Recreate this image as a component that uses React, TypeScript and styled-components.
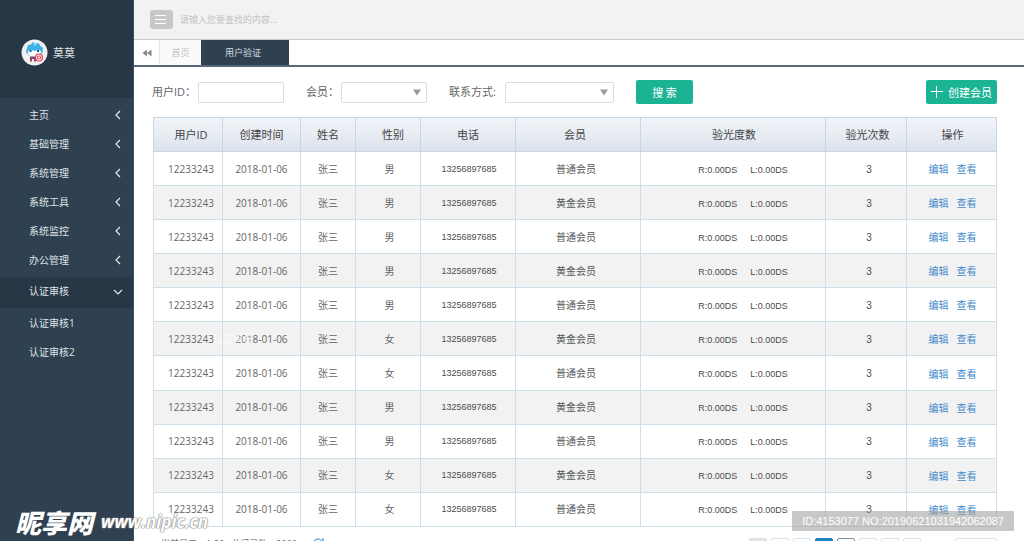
import React from "react";
import styled, { createGlobalStyle } from "styled-components";

const sans = `"Open Sans", "Noto Sans CJK SC", sans-serif`;
const cjk = `"Noto Sans CJK SC", sans-serif`;
const arial = `"Liberation Sans", "Noto Sans CJK SC", sans-serif`;

const GlobalStyle = createGlobalStyle`
  * { box-sizing: border-box; }
  body { margin: 0; font-family: ${cjk}; font-size: 11px; color: #666; background: #fff; overflow: hidden; }
  button, input, select { font: inherit; }
  button { border: 0; padding: 0; background: none; color: inherit; cursor: pointer; }
  a { color: inherit; text-decoration: none; }
`;

const Shell = styled.div`
  display: flex;
  height: 100vh;
  overflow: hidden;
`;

const Sidebar = styled.aside`
  flex: 0 0 134px;
  background: #2f4050;
  border-right: 1px solid #3d5064;
  color: #dfe3e7;
`;

const Profile = styled.div`
  display: flex;
  align-items: center;
  gap: 5px;
  height: 98px;
  padding: 6px 0 0 21px;
  background: #283745;
  font-size: 11px;
`;

const Avatar = styled.svg`
  width: 27px;
  height: 27px;
`;

const NavList = styled.nav`
  display: flex;
  flex-direction: column;
  padding-top: 3px;
`;

const NavItem = styled.button<{ $open?: boolean }>`
  display: flex;
  align-items: center;
  justify-content: space-between;
  height: ${(p) => (p.$open ? 31 : 29)}px;
  padding: 0 10px ${(p) => (p.$open ? 4 : 2)}px 29px;
  margin: ${(p) => (p.$open ? "2px 0 1px" : 0)};
  background: ${(p) => (p.$open ? "#283745" : "transparent")};
  font-size: 10px;
  line-height: 14px;
`;

const SubItem = styled.a`
  height: 29px;
  padding-left: 29px;
  font-family: ${sans};
  font-size: 10px;
  line-height: 29px;
`;

const Chevron = styled.svg`
  width: 10px;
  height: 10px;
  fill: none;
  stroke: #e4e8eb;
  stroke-width: 1.2;
`;

const Main = styled.main`
  flex: 1;
  min-width: 0;
  display: flex;
  flex-direction: column;
`;

const TopBar = styled.header`
  display: flex;
  align-items: center;
  gap: 7px;
  flex: 0 0 40px;
  padding: 0 16px 1px;
  background: #f2f2f2;
  border-bottom: 1px solid #c8c8c8;
`;

const MenuButton = styled.button`
  width: 23px;
  height: 19px;
  border-radius: 3px;
  background: #c8c8c8;
  svg { display: block; }
`;

const SearchInput = styled.input`
  width: 200px;
  height: 20px;
  padding: 0;
  border: 0;
  background: transparent;
  font-size: 9px;
  &::placeholder { color: #c2c2c2; }
`;

const TabBar = styled.div`
  display: flex;
  flex: 0 0 27px;
  border-bottom: 2px solid #5a687b;
`;

const TabBack = styled.button`
  width: 25px;
  svg { display: block; margin: 0 auto; }
`;

const Tab = styled.button<{ $active?: boolean }>`
  width: ${(p) => (p.$active ? 88 : 42)}px;
  background: ${(p) => (p.$active ? "#2f4050" : "#fafafa")};
  color: ${(p) => (p.$active ? "#d9dde1" : "#bdbdbd")};
  border-left: ${(p) => (p.$active ? 0 : "1px solid #e6e6e6")};
  font-size: 9px;
  padding-right: ${(p) => (p.$active ? 4 : 0)}px;
`;

const Filters = styled.form`
  display: flex;
  align-items: center;
  padding: 13px 27px 13px 18px;
  height: 50px;
`;

const Field = styled.label<{ $gap?: number }>`
  display: flex;
  align-items: center;
  gap: ${(p) => p.$gap ?? 2}px;
  margin-right: 22px;
  font-family: ${sans};
  font-size: 11px;
  line-height: 16px;
  white-space: nowrap;
`;

const TextInput = styled.input`
  width: 86px;
  height: 21px;
  border: 1px solid #dcdcdc;
  border-radius: 2px;
  background: #fff;
`;

const SelectWrap = styled.span<{ $width: number }>`
  display: grid;
  align-items: center;
  width: ${(p) => p.$width}px;
  > * { grid-area: 1 / 1; }
  svg { justify-self: end; margin-right: 5px; pointer-events: none; }
`;

const Select = styled.select`
  appearance: none;
  width: 100%;
  height: 21px;
  border: 1px solid #dcdcdc;
  border-radius: 2px;
  background: #fff;
`;

const GreenButton = styled.button<{ $width: number }>`
  display: flex;
  align-items: center;
  justify-content: center;
  gap: 5px;
  width: ${(p) => p.$width}px;
  height: 24px;
  border-radius: 2px;
  background: #1ab394;
  color: #fff;
  font-size: 11px;
  line-height: 16px;
  white-space: pre;
`;

const Spacer = styled.span`
  flex: 1;
`;

const TableArea = styled.section`
  padding: 0 27px 0 19px;
`;

const Table = styled.table`
  width: 100%;
  height: 410px;
  table-layout: fixed;
  border-collapse: collapse;
  border: 1px solid #cfdfe9;
`;

const Th = styled.th<{ $left?: number; $right?: number }>`
  height: 34px;
  padding: 0 ${(p) => p.$right ?? 0}px 0 ${(p) => p.$left ?? 0}px;
  border: 1px solid #c5d7e4;
  font-family: ${sans};
  font-size: 11px;
  line-height: 16px;
  font-weight: 400;
  color: #444;
`;

const HeadRow = styled.tr`
  background: linear-gradient(#f2f3f8, #dce3ed);
`;

const BodyRow = styled.tr`
  &:nth-child(even) { background: #f2f2f2; }
`;

const Td = styled.td<{ $left?: number; $right?: number }>`
  padding: 0 ${(p) => p.$right ?? 0}px 0 ${(p) => p.$left ?? 0}px;
  border: 1px solid #cfdfe9;
  text-align: center;
  white-space: nowrap;
  font-family: ${sans};
  font-size: 10px;
  line-height: 14px;
  color: #666;
`;

const LatinTd = styled(Td)<{ $low?: boolean }>`
  padding-top: ${(p) => (p.$low ? 2 : 0)}px;
  font-family: ${arial};
  font-size: 9px;
  color: #4c4c4c;
`;

const CountTd = styled(LatinTd)`
  font-size: 10px;
`;

const GradeTd = styled(Td)`
  color: #555;
`;

const ActionTd = styled(Td)`
  padding-top: 1px;
`;

const Degrees = styled.span`
  display: flex;
  justify-content: center;
  gap: 13px;
`;

const Action = styled.a`
  margin: 0 4px;
  color: #428bca;
`;

const Footer = styled.footer`
  display: flex;
  align-items: flex-start;
  gap: 4px;
  padding: 11px 27px 0 27px;
  font-family: ${sans};
  font-size: 9px;
  line-height: 12px;
`;

const Summary = styled.span`
  white-space: pre;
  margin-right: 11px;
`;

const PageButton = styled.button<{ $tone?: "muted" | "current" | "dark" }>`
  width: 18px;
  height: 18px;
  border: 1px solid ${(p) => (p.$tone === "current" ? "#1c84c6" : p.$tone === "dark" ? "#7e8a99" : "#d9e0e6")};
  border-radius: 2px;
  background: ${(p) => (p.$tone === "current" ? "#1c84c6" : p.$tone === "muted" ? "#e4e4e4" : "#fff")};
  color: ${(p) => (p.$tone === "current" ? "#fff" : "#666")};
`;

const PageInput = styled.input`
  width: 42px;
  height: 18px;
  margin-left: 30px;
  border: 1px solid #dfe3e7;
  border-radius: 2px;
`;

const SiteMark = styled.div`
  position: absolute;
  left: 15px;
  bottom: 2px;
  display: flex;
  align-items: center;
  gap: 8px;
  color: #fff;
  font-style: italic;
  font-weight: 900;
  font-size: 26px;
  line-height: 34px;
  white-space: nowrap;
`;

const SiteAddress = styled.span`
  font-family: "Open Sans", sans-serif;
  font-weight: 700;
  font-size: 17px;
  text-shadow: 0 0 1px #777, 0 0 1px #777, 0 0 2px #999;
`;

const GhostLabel = styled.span`
  position: absolute;
  left: 213px;
  top: 332px;
  color: rgba(255, 255, 255, 0.7);
  font-size: 10px;
  line-height: 14px;
  pointer-events: none;
`;

const SerialMark = styled.div`
  position: absolute;
  right: 10px;
  bottom: 10px;
  height: 20px;
  padding: 0 10px;
  background: rgba(160, 160, 160, 0.58);
  color: #fff;
  font-family: ${arial};
  font-size: 11px;
  line-height: 20px;
`;

const navItems = ["主页", "基础管理", "系统管理", "系统工具", "系统监控", "办公管理"];
const columns = [
  { label: "用户ID", width: 69, left: 6 },
  { label: "创建时间", width: 78 },
  { label: "姓名", width: 55 },
  { label: "性别", width: 65, left: 10 },
  { label: "电话", width: 95 },
  { label: "会员", width: 125, right: 6 },
  { label: "验光度数", width: 185, left: 2 },
  { label: "验光次数", width: 81, left: 3 },
  { label: "操作", width: 90, left: 2 },
];
const genders = ["男", "男", "男", "男", "男", "女", "女", "男", "男", "女", "女"];

const Arrow = () => (
  <svg width="10" height="7" viewBox="0 0 10 7" aria-hidden="true">
    <path d="M1 .5h8L5 6.5z" fill="#999" />
  </svg>
);

export default function App() {
  return (
    <>
      <GlobalStyle />
      <Shell>
        <Sidebar>
          <Profile>
            <Avatar viewBox="0 0 27 27" aria-hidden="true">
              <circle cx="13.5" cy="13.5" r="13" fill="#f0f0f0" />
              <path d="M5 13l1-4 1-3 3-.5L12 3l3 1 3 .5 1.5 2.5 2.5 2-.5 4.5-3 3H8z" fill="#3db2ea" />
              <path d="M12 4l2 3 2-3" fill="#a6e0f8" />
              <path d="M7 12q3-2 6.500 0 3.500-2 6.500 0l-.5 4q-6 3.500-12 0z" fill="#fff" />
              <path d="M8.500 11h2v2h-2zM16 11h2v2h-2z" fill="#23607f" />
              <path d="M9 17.500h6v2.500H9z" fill="#7a4a78" />
              <path d="M9 20h2v2.500H9zM13 20h2v2.500h-2z" fill="#b03a4e" />
              <circle cx="18" cy="18.5" r="4" fill="#e0364f" />
              <circle cx="18" cy="18.5" r="2.9" fill="#fff" />
              <circle cx="18" cy="18.5" r="2.1" fill="#e0364f" />
              <circle cx="18" cy="18.5" r="1.1" fill="#fff" />
            </Avatar>
            <span>莫莫</span>
          </Profile>
          <NavList>
            {navItems.map((name) => (
              <NavItem key={name}>
                {name}
                <Chevron viewBox="0 0 10 10"><path d="M7 1L3 5l4 4" /></Chevron>
              </NavItem>
            ))}
            <NavItem $open>
              认证审核
              <Chevron viewBox="0 0 10 10"><path d="M1 4l4 4 4-4" /></Chevron>
            </NavItem>
            <SubItem href="#1">认证审核1</SubItem>
            <SubItem href="#2">认证审核2</SubItem>
          </NavList>
        </Sidebar>
        <Main>
          <TopBar>
            <MenuButton aria-label="菜单">
              <svg width="23" height="19" viewBox="0 0 23 19"><path d="M5 5.5h11M5 9.5h11M5 13.5h11" stroke="#fff" /></svg>
            </MenuButton>
            <SearchInput aria-label="查找" placeholder="请输入您要查找的内容..." />
          </TopBar>
          <TabBar>
            <TabBack aria-label="后退">
              <svg width="10" height="8" viewBox="0 0 10 8"><path d="M5 .5v7L.5 4zM9.5.5v7L5 4z" fill="#888" /></svg>
            </TabBack>
            <Tab>首页</Tab>
            <Tab $active>用户验证</Tab>
          </TabBar>
          <Filters onSubmit={(e) => e.preventDefault()}>
            <Field>用户ID：<TextInput /></Field>
            <Field>
              会员：
              <SelectWrap $width={86}><Select /><Arrow /></SelectWrap>
            </Field>
            <Field $gap={9}>
              联系方式:
              <SelectWrap $width={109}><Select /><Arrow /></SelectWrap>
            </Field>
            <GreenButton $width={57}>搜 索</GreenButton>
            <Spacer />
            <GreenButton $width={71} type="button">
              <svg width="12" height="12" viewBox="0 0 12 12"><path d="M5.5 0v12M0 5.5h12" stroke="#fff" /></svg>
              创建会员
            </GreenButton>
          </Filters>
          <TableArea>
            <Table>
              <colgroup>
                {columns.map((c) => <col key={c.label} style={{ width: `${(c.width / 843) * 100}%` }} />)}
              </colgroup>
              <thead>
                <HeadRow>
                  {columns.map((c) => <Th key={c.label} $left={c.left} $right={c.right}>{c.label}</Th>)}
                </HeadRow>
              </thead>
              <tbody>
                {genders.map((gender, i) => (
                  <BodyRow key={i}>
                    <Td $left={6}>12233243</Td>
                    <Td>2018-01-06</Td>
                    <Td>张三</Td>
                    <Td $left={3}>{gender}</Td>
                    <LatinTd $left={2}>13256897685</LatinTd>
                    <GradeTd $right={4}>{i % 2 ? "黄金会员" : "普通会员"}</GradeTd>
                    <LatinTd $low $left={20}>
                      <Degrees><span>R:0.00DS</span><span>L:0.00DS</span></Degrees>
                    </LatinTd>
                    <CountTd $low $left={6}>3</CountTd>
                    <ActionTd $left={2}><Action href="#edit">编辑</Action><Action href="#view">查看</Action></ActionTd>
                  </BodyRow>
                ))}
              </tbody>
            </Table>
          </TableArea>
          <Footer>
            <Summary>当前显示：1-20   总记录数：2000</Summary>
            <svg width="12" height="12" viewBox="0 0 12 12"><path d="M1 6a5 5 0 0 1 9-3M11 0v4H7" fill="none" stroke="#1c84c6" /></svg>
            <Spacer />
            <PageButton $tone="muted">«</PageButton>
            <PageButton>1</PageButton>
            <PageButton>2</PageButton>
            <PageButton $tone="current">3</PageButton>
            <PageButton $tone="dark">4</PageButton>
            <PageButton>5</PageButton>
            <PageButton>6</PageButton>
            <PageButton>»</PageButton>
            <PageInput aria-label="页码" />
          </Footer>
        </Main>
      </Shell>
      <GhostLabel>认证审核</GhostLabel>
      <SiteMark>昵享网<SiteAddress>www.nipic.cn</SiteAddress></SiteMark>
      <SerialMark>ID:4153077 NO:20190621031942062087</SerialMark>
    </>
  );
}
